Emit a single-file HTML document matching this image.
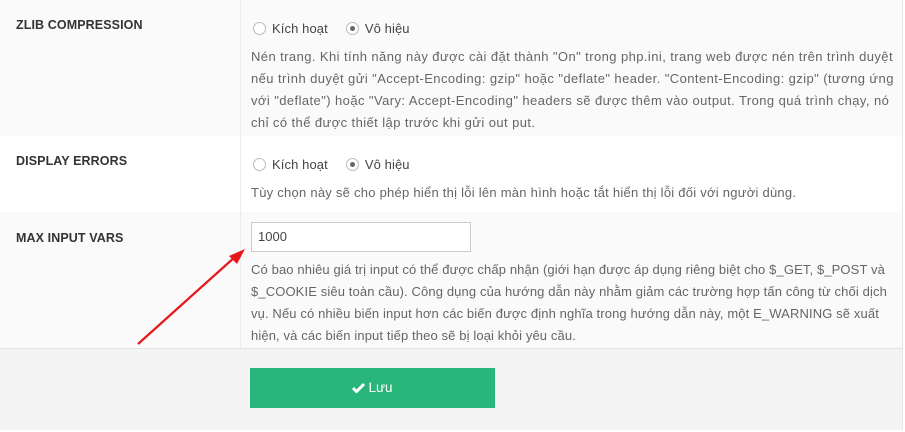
<!DOCTYPE html>
<html><head><meta charset="utf-8"><style>
*{margin:0;padding:0;box-sizing:border-box}
body{width:905px;height:432px;background:#fff;font-family:"Liberation Sans",sans-serif;position:relative;overflow:hidden}
.wrap{position:absolute;left:0;top:0;width:903px;height:430px;border-right:1px solid #e5e5e5;border-bottom:1px solid #e0e0e0}
.row{position:absolute;left:0;width:902px;overflow:hidden}
.lbl{position:absolute;left:16px;font-weight:bold;font-size:12.5px;color:#333;letter-spacing:0.1px}
.div{position:absolute;left:240px;top:0;bottom:0;width:1px;background:#ececec}
.radios{position:absolute;left:253px;font-size:13px;color:#444;white-space:nowrap;letter-spacing:0.1px}
.r{display:inline-block;width:13px;height:13px;border:1px solid #bbb;border-radius:50%;vertical-align:-2px;margin-right:6px;position:relative;background:#fff}
.r.on::after{content:"";position:absolute;left:3px;top:3px;width:5px;height:5px;border-radius:50%;background:#666}
.desc{position:absolute;left:251px;font-size:13px;letter-spacing:0.42px;color:#666;line-height:22px;white-space:nowrap}
</style></head><body>
<div class="wrap">
<div class="row" style="top:0;height:136px;background:#fafafa">
 <div class="div"></div>
 <div class="lbl" style="top:18px">ZLIB COMPRESSION</div>
 <div class="radios" style="top:21px"><span class="r"></span>Kích hoạt<span style="display:inline-block;width:18px"></span><span class="r on"></span>Vô hiệu</div>
 <div class="desc" style="top:46px">Nén trang. Khi tính năng này được cài đặt thành "On" trong php.ini, trang web được nén trên trình duyệt<br>nếu trình duyệt gửi "Accept-Encoding: gzip" hoặc "deflate" header. "Content-Encoding: gzip" (tương ứng<br>với "deflate") hoặc "Vary: Accept-Encoding" headers sẽ được thêm vào output. Trong quá trình chạy, nó<br>chỉ có thể được thiết lập trước khi gửi out put.</div>
</div>
<div class="row" style="top:136px;height:76px;background:#fff">
 <div class="div"></div>
 <div class="lbl" style="top:18px">DISPLAY ERRORS</div>
 <div class="radios" style="top:21px"><span class="r"></span>Kích hoạt<span style="display:inline-block;width:18px"></span><span class="r on"></span>Vô hiệu</div>
 <div class="desc" style="top:46px;letter-spacing:0.25px">Tùy chọn này sẽ cho phép hiển thị lỗi lên màn hình hoặc tắt hiển thị lỗi đối với người dùng.</div>
</div>
<div class="row" style="top:212px;height:136px;background:#fafafa">
 <div class="div"></div>
 <div class="lbl" style="top:19px">MAX INPUT VARS</div>
 <div style="position:absolute;left:251px;top:10px;width:220px;height:30px;border:1px solid #ccc;background:#fff;font-size:13px;color:#444;padding:6px 6px">1000</div>
 <div class="desc" style="top:47px;letter-spacing:0.12px">Có bao nhiêu giá trị input có thể được chấp nhận (giới hạn được áp dụng riêng biệt cho $_GET, $_POST và<br>$_COOKIE siêu toàn cầu). Công dụng của hướng dẫn này nhằm giảm các trường hợp tấn công từ chối dịch<br>vụ. Nếu có nhiều biến input hơn các biến được định nghĩa trong hướng dẫn này, một E_WARNING sẽ xuất<br>hiện, và các biến input tiếp theo sẽ bị loại khỏi yêu cầu.</div>
</div>
<div class="row" style="top:348px;height:82px;background:#f4f4f4;border-top:1px solid #e3e3e3">
 <div style="position:absolute;left:250px;top:19px;width:245px;height:40px;background:#28b67a;color:#fff;font-size:13.5px;text-align:center;line-height:40px">
  <svg width="13" height="11" viewBox="0 0 13 11" style="vertical-align:-1px;margin-right:3px"><path d="M1 6 L4.5 9.5 L12 2" stroke="#fff" stroke-width="3" fill="none"/></svg>Lưu</div>
</div>
</div>
<svg style="position:absolute;left:0;top:0" width="905" height="432"><line x1="138" y1="344" x2="236" y2="256" stroke="#e8171c" stroke-width="2.2"/><path d="M245 249 L229 256 L237 264 Z" fill="#e8171c"/></svg>
</body></html>
